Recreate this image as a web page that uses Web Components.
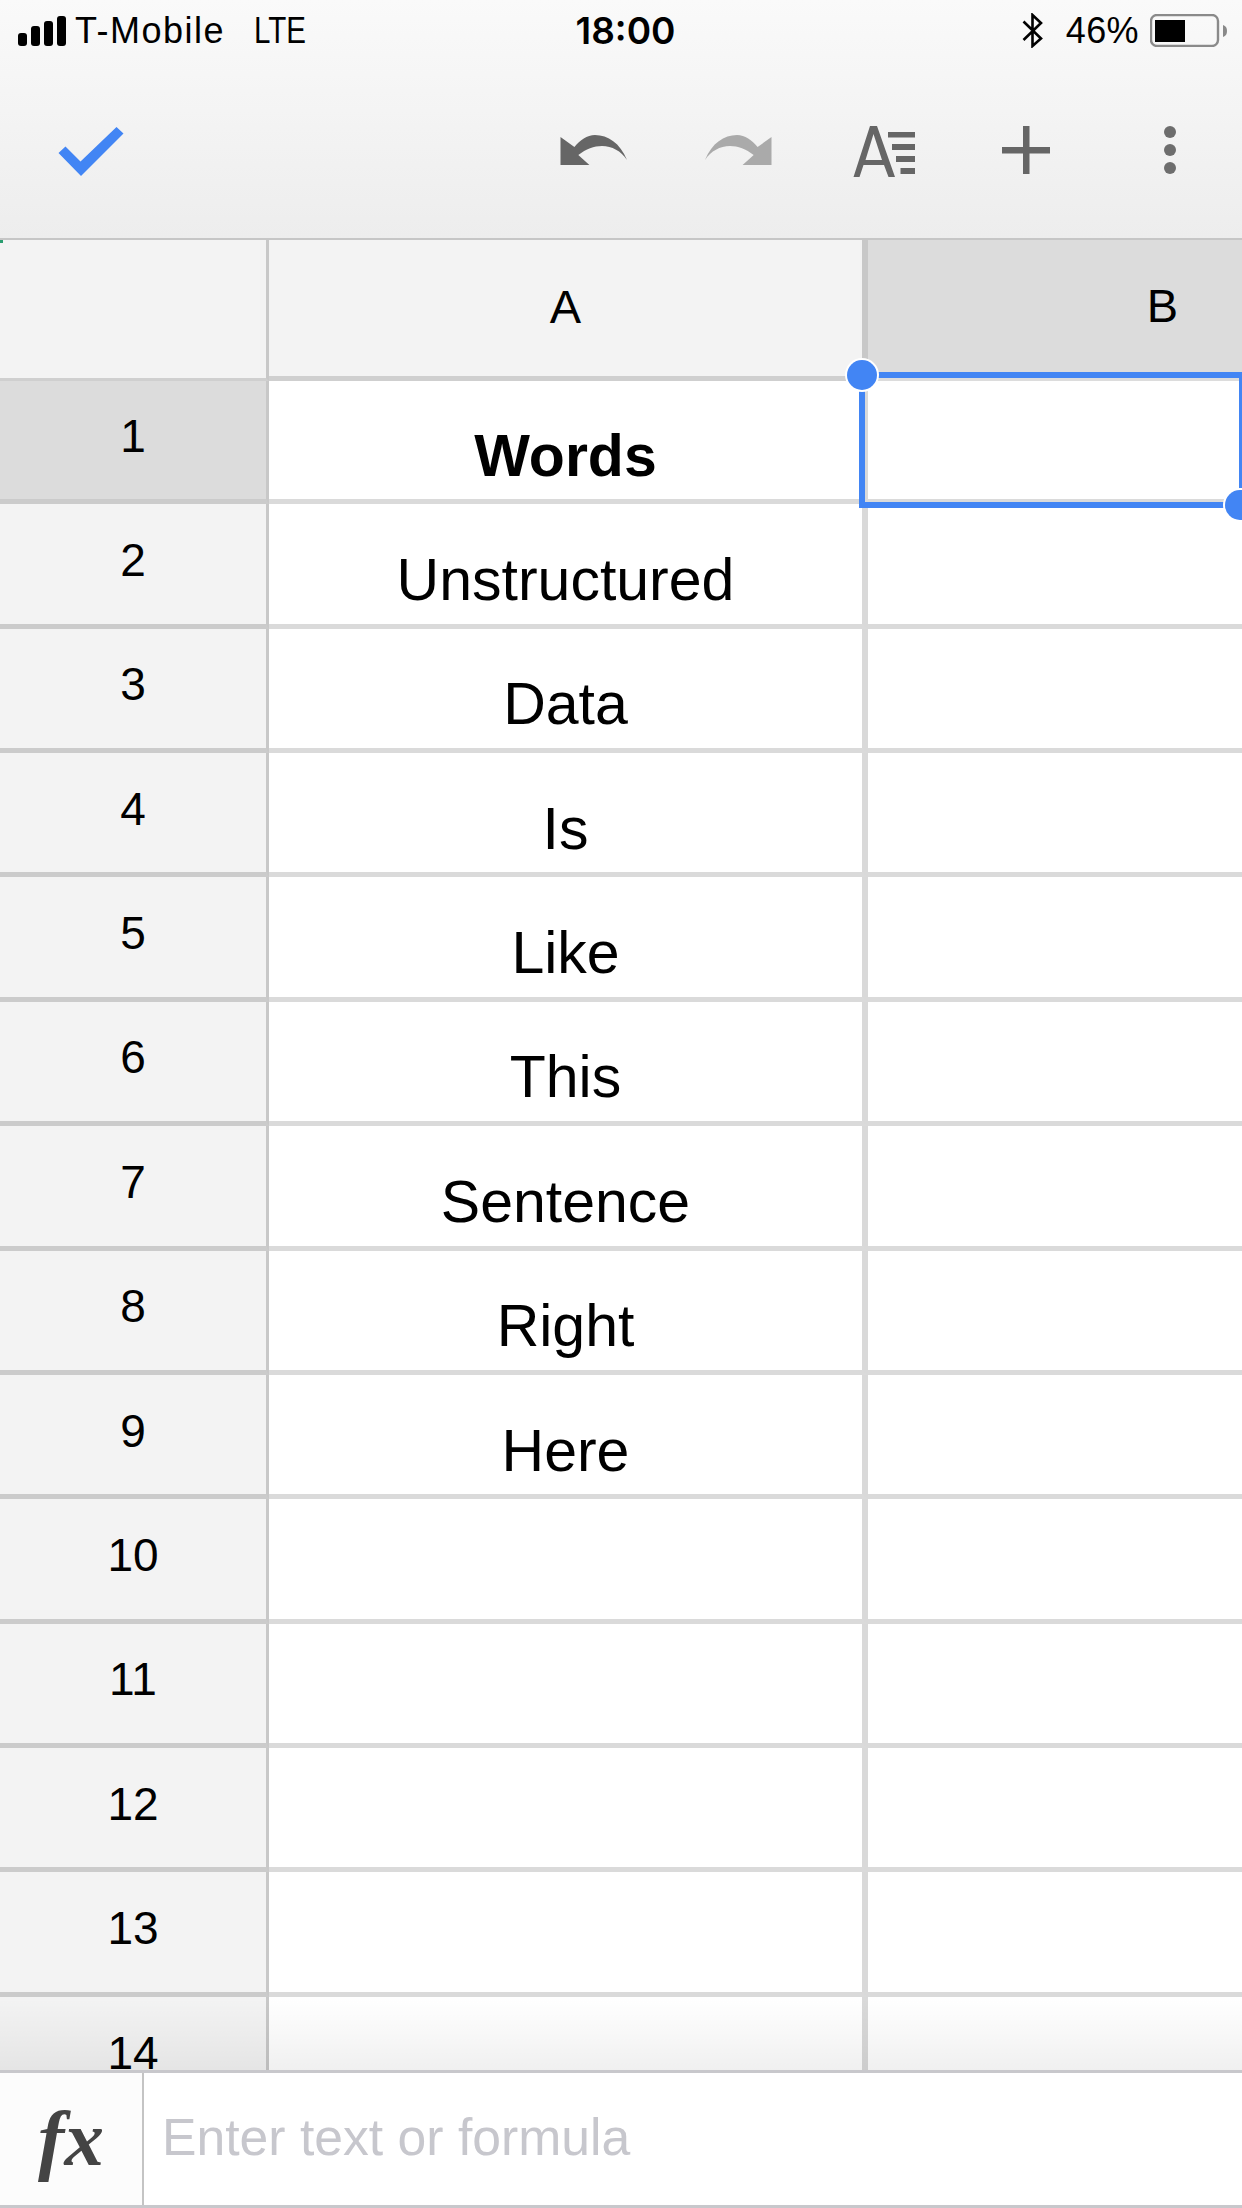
<!DOCTYPE html>
<html>
<head>
<meta charset="utf-8">
<title>Sheet</title>
<style>
  html, body { margin: 0; padding: 0; background: #fff; }
  body { width: 1242px; height: 2208px; overflow: hidden; font-family: "Liberation Sans", Arial, sans-serif; }
</style>
</head>
<body>
<sheet-app>
  <sheet-topbar></sheet-topbar>
  <sheet-grid>
    <sheet-columns></sheet-columns>
    <sheet-row num="1" active bold first>Words</sheet-row>
    <sheet-row num="2">Unstructured</sheet-row>
    <sheet-row num="3">Data</sheet-row>
    <sheet-row num="4">Is</sheet-row>
    <sheet-row num="5">Like</sheet-row>
    <sheet-row num="6">This</sheet-row>
    <sheet-row num="7">Sentence</sheet-row>
    <sheet-row num="8">Right</sheet-row>
    <sheet-row num="9">Here</sheet-row>
    <sheet-row num="10"></sheet-row>
    <sheet-row num="11"></sheet-row>
    <sheet-row num="12"></sheet-row>
    <sheet-row num="13"></sheet-row>
    <sheet-row num="14"></sheet-row>
  </sheet-grid>
  <formula-bar></formula-bar>
</sheet-app>

<script>
class SheetApp extends HTMLElement {
  constructor() {
    super();
    this.attachShadow({ mode: 'open' });
    this.shadowRoot.innerHTML = `
      <style>
        :host { display: flex; flex-direction: column; width: 1242px; height: 2208px; }
      </style>
      <slot></slot>`;
  }
}

class SheetTopbar extends HTMLElement {
  constructor() {
    super();
    this.attachShadow({ mode: 'open' });
    this.shadowRoot.innerHTML = `
      <style>
        :host {
          display: block;
          height: 240px;
          box-sizing: border-box;
          border-bottom: 2px solid #c6c6c6;
          background: linear-gradient(#fafafa, #ededed);
          color: #000;
          flex: none;
        }
        .status {
          height: 60px;
          display: grid;
          grid-template-columns: 1fr auto 1fr;
          align-items: center;
          font-size: 36px;
          padding-top: 1px;
          box-sizing: border-box;
        }
        .left { display: flex; align-items: center; padding-left: 18px; }
        .left svg { margin-right: 9px; }
        .carrier { letter-spacing: 1.5px; }
        .lte { margin-left: 29px; display: inline-block; transform: scaleX(.82); transform-origin: left center; }
        .time { font-size: 37px; font-weight: 600; font-family: Inter, "Liberation Sans", sans-serif; padding-left: 9px; }
        .right { display: flex; align-items: center; justify-content: flex-end; }
        .bt { margin-right: 23px; }
        .pct { margin-right: 11px; letter-spacing: .4px; }
        .battery { margin-right: 15px; }
        .tools { height: 178px; display: flex; align-items: center; }
        .tool { width: 144px; display: flex; justify-content: center; }
        .check { margin-left: 18.5px; margin-right: auto; }
        svg { display: block; flex: none; }
      </style>
      <div class="status">
        <div class="left">
          <svg width="48" height="30" viewBox="18 15 48 30" fill="#000">
            <rect x="18" y="32" width="9" height="13" rx="3"/>
            <rect x="31" y="25" width="9" height="20" rx="3"/>
            <rect x="44" y="20" width="9" height="25" rx="3"/>
            <rect x="57" y="15" width="9" height="30" rx="3"/>
          </svg>
          <span class="carrier">T-Mobile</span>
          <span class="lte">LTE</span>
        </div>
        <div class="time">18:00</div>
        <div class="right">
          <svg class="bt" width="21" height="35" viewBox="1023 13 21 35" fill="none" stroke="#000" stroke-width="2.6">
            <path d="M1024.5 21.5L1042 38.5L1033.5 46V15L1042 23L1024.5 40"/>
          </svg>
          <span class="pct">46%</span>
          <svg class="battery" width="77" height="33" viewBox="1150 13 77 33">
            <rect x="1151" y="14" width="67" height="31" rx="6" fill="none" stroke="#8a8a8a" stroke-width="2.4"/>
            <rect x="1155" y="19" width="30" height="22" fill="#000"/>
            <path d="M1223 24C1226 25 1227 27 1227 30C1227 33 1226 35 1223 36Z" fill="#8a8a8a"/>
          </svg>
        </div>
      </div>
      <div class="tools">
        <div class="tool check">
          <svg width="80" height="60" viewBox="51.5 119 80 60">
            <polygon fill="#4285f4" points="59,153 66,146.5 81,161.5 117,127 124,133.5 81.5,176"/>
          </svg>
        </div>
        <div class="tool">
          <svg width="80" height="60" viewBox="554 119 80 60">
            <path fill="#666" transform="translate(1332 0) scale(-1 1)" d="M705 160C712 143 724 135 737 135C745 135 752 140 757.6 147L771.5 137V165H742.6L753.7 155C746 149 738 146 730 146C720 146 711 151 705 160Z"/>
          </svg>
        </div>
        <div class="tool">
          <svg width="80" height="60" viewBox="698 119 80 60">
            <path fill="#aaa" d="M705 160C712 143 724 135 737 135C745 135 752 140 757.6 147L771.5 137V165H742.6L753.7 155C746 149 738 146 730 146C720 146 711 151 705 160Z"/>
          </svg>
        </div>
        <div class="tool">
          <svg width="80" height="60" viewBox="842 119 80 60" fill="#666">
            <path fill-rule="evenodd" d="M870 126H877L895 177H888.5L884 165H863.5L859.5 177H853.5ZM873.5 134L865.5 160H882Z"/>
            <rect x="888" y="132" width="27" height="5.5"/>
            <rect x="892" y="144" width="23" height="6"/>
            <rect x="896" y="156" width="19" height="6"/>
            <rect x="900.5" y="168" width="14.5" height="6"/>
          </svg>
        </div>
        <div class="tool">
          <svg width="80" height="60" viewBox="986 119 80 60" fill="#666">
            <rect x="1023" y="126" width="6.5" height="48"/>
            <rect x="1002" y="147" width="48" height="6.5"/>
          </svg>
        </div>
        <div class="tool">
          <svg width="80" height="60" viewBox="1130 119 80 60" fill="#6d6d6d">
            <circle cx="1170" cy="132" r="6"/>
            <circle cx="1170" cy="150" r="6"/>
            <circle cx="1170" cy="168" r="6"/>
          </svg>
        </div>
      </div>`;
  }
}

class SheetGrid extends HTMLElement {
  constructor() {
    super();
    this.attachShadow({ mode: 'open' });
    this.shadowRoot.innerHTML = `
      <style>
        :host {
          display: block;
          position: relative;
          flex: 1;
          min-height: 0;
          overflow: hidden;
          background: #fff;
        }
        .mark { position: absolute; left: 0; top: 0; width: 3px; height: 3px; background: #2a9d6f; }
        .fade {
          position: absolute; left: 0; right: 0; bottom: 0; height: 72px;
          background: linear-gradient(rgba(0,0,0,0), rgba(0,0,0,.06));
        }
        .selection {
          position: absolute; left: 859px; top: 132px;
          border: 6px solid #4285f4; border-right-width: 3px;
          width: 374px; height: 124px;
        }
        .handle {
          position: absolute; width: 30px; height: 30px; border-radius: 50%;
          background: #4285f4; box-shadow: 0 0 0 2px #fff;
        }
        .handle.tl { left: 847px; top: 120px; }
        .handle.br { left: 1225px; top: 250px; }
      </style>
      <slot></slot>
      <div class="mark"></div>
      <div class="fade"></div>
      <div class="selection"></div>
      <div class="handle tl"></div>
      <div class="handle br"></div>`;
  }
}

class SheetColumns extends HTMLElement {
  constructor() {
    super();
    this.attachShadow({ mode: 'open' });
    this.shadowRoot.innerHTML = `
      <style>
        :host {
          display: grid;
          grid-template-columns: 269px 599px 589px;
          height: 141px;
          overflow: hidden;
          font-size: 47px;
          color: #000;
        }
        div {
          box-sizing: border-box;
          background: #f3f3f3;
          border-bottom: 5px solid #cfcfcf;
          display: flex;
          align-items: center;
          justify-content: center;
          padding-bottom: 4px;
        }
        .corner { border-right: 3px solid #c8c8c8; border-bottom-width: 3px; }
        .a { border-right: 6px solid #c8c8c8; }
        .b { background: #dcdcdc; border-bottom: 0; padding-bottom: 10px; }
      </style>
      <div class="corner"></div>
      <div class="a">A</div>
      <div class="b">B</div>`;
  }
}

class SheetRow extends HTMLElement {
  constructor() {
    super();
    this.attachShadow({ mode: 'open' });
  }

  connectedCallback() {
    const active = this.hasAttribute('active');
    const height = this.hasAttribute('first') ? 123.2 : 124.4;
    this.shadowRoot.innerHTML = `
      <style>
        :host {
          display: grid;
          grid-template-columns: 269px 599px 593px;
          height: ${height}px;
          overflow: hidden;
          color: #000;
        }
        div { box-sizing: border-box; display: flex; align-items: center; justify-content: center; }
        .num {
          font-size: 46px;
          line-height: 32px;
          background: ${active ? '#dcdcdc' : '#f3f3f3'};
          border-right: 3px solid #c8c8c8;
          border-bottom: 5px solid #cbcbcb;
          padding-bottom: 8px;
        }
        .cell {
          font-size: 59px;
          font-weight: ${this.hasAttribute('bold') ? 'bold' : 'normal'};
          background: #fff;
          border-bottom: 5px solid #dadada;
          padding-top: 32px;
        }
        .a { border-right: 6px solid #d9d9d9; }
      </style>
      <div class="num">${this.getAttribute('num')}</div>
      <div class="cell a"><slot></slot></div>
      <div class="cell"></div>`;
  }
}

class FormulaBar extends HTMLElement {
  constructor() {
    super();
    this.attachShadow({ mode: 'open' });
    this.shadowRoot.innerHTML = `
      <style>
        :host {
          display: flex;
          flex: none;
          height: 138px;
          box-sizing: border-box;
          background: #fff;
          border-top: 3px solid #c8c8cc;
          border-bottom: 3px solid #c8c8cc;
        }
        .fx {
          width: 144px;
          box-sizing: border-box;
          border-right: 2px solid #c4c4c4;
          background: #fcfcfc;
          display: flex;
          align-items: center;
          justify-content: center;
          font: italic bold 79px "Liberation Serif", serif;
          color: #444;
        }
        .input {
          flex: 1;
          display: flex;
          align-items: center;
          padding-left: 18px;
          padding-bottom: 4px;
          font-size: 51.7px;
          color: #c7c7cd;
        }
      </style>
      <div class="fx">fx</div>
      <div class="input">Enter text or formula</div>`;
  }
}

customElements.define('sheet-app', SheetApp);
customElements.define('sheet-topbar', SheetTopbar);
customElements.define('sheet-grid', SheetGrid);
customElements.define('sheet-columns', SheetColumns);
customElements.define('sheet-row', SheetRow);
customElements.define('formula-bar', FormulaBar);
</script>
</body>
</html>
